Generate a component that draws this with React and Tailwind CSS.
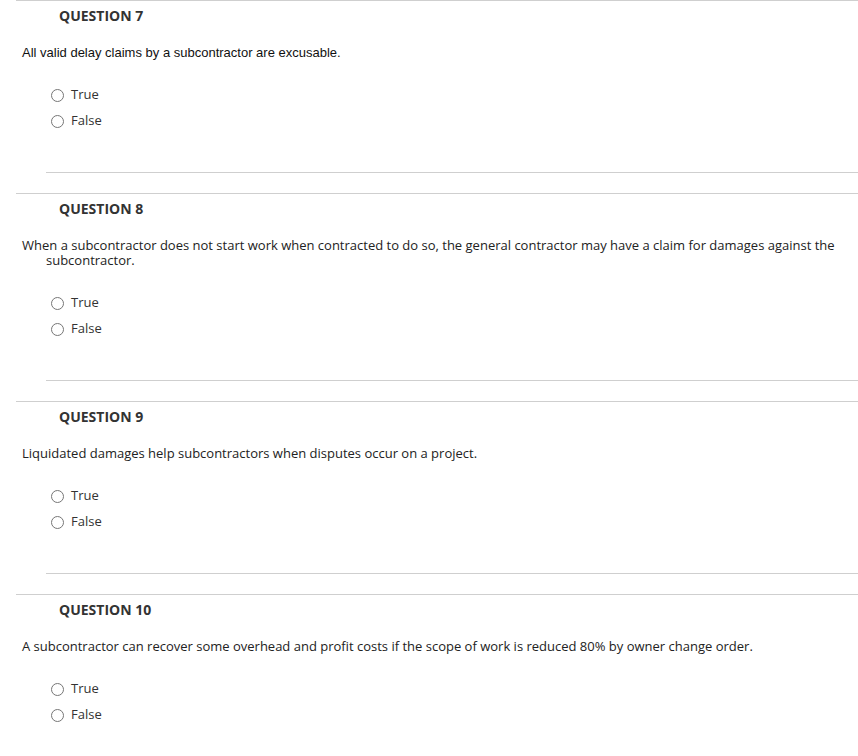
import React from "react";

const questions = [
  {
    no: 7,
    text: "All valid delay claims by a subcontractor are excusable.",
    arial: true,
  },
  {
    no: 8,
    text: "When a subcontractor does not start work when contracted to do so, the general contractor may have a claim for damages against the subcontractor.",
  },
  {
    no: 9,
    text: "Liquidated damages help subcontractors when disputes occur on a project.",
  },
  {
    no: 10,
    text: "A subcontractor can recover some overhead and profit costs if the scope of work is reduced 80% by owner change order.",
  },
];

const Question = ({ no, text, arial, last }) => (
  <div className="border-t border-[#cfcfcf]">
    <h3 className="mt-[5px] pl-[43px] text-[14px] leading-[20px] font-bold text-[#333] font-['Open_Sans',sans-serif]">
      QUESTION {no}
    </h3>
    <p
      className={
        "mt-[19px] pl-[30px] indent-[-24px] leading-[15px] " +
        (arial
          ? "text-[13px] text-[#111] font-['Liberation_Sans',Arial,sans-serif]"
          : "text-[13px] text-[#222] font-['Open_Sans',sans-serif]")
      }
    >
      {text}
    </p>
    <ul className="mt-[22px] pl-[35px]">
      {["True", "False"].map((opt) => (
        <li key={opt} className="flex items-center h-[26px]">
          <input
            type="radio"
            name={"q" + no}
            className="m-0 w-[13px] h-[13px]"
          />
          <label className="ml-[7px] text-[13px] text-[#333] font-['Open_Sans',sans-serif]">
            {opt}
          </label>
        </li>
      ))}
    </ul>
    {!last && <div className="mt-[38px] mb-[20px] ml-[30px] border-t border-[#cfcfcf]" />}
  </div>
);

const App = () => {
  return (
    <div className="bg-white min-h-[756px] pl-[16px]">
      {questions.map((q, i) => (
        <Question key={q.no} {...q} last={i === questions.length - 1} />
      ))}
    </div>
  );
};

export default App;
